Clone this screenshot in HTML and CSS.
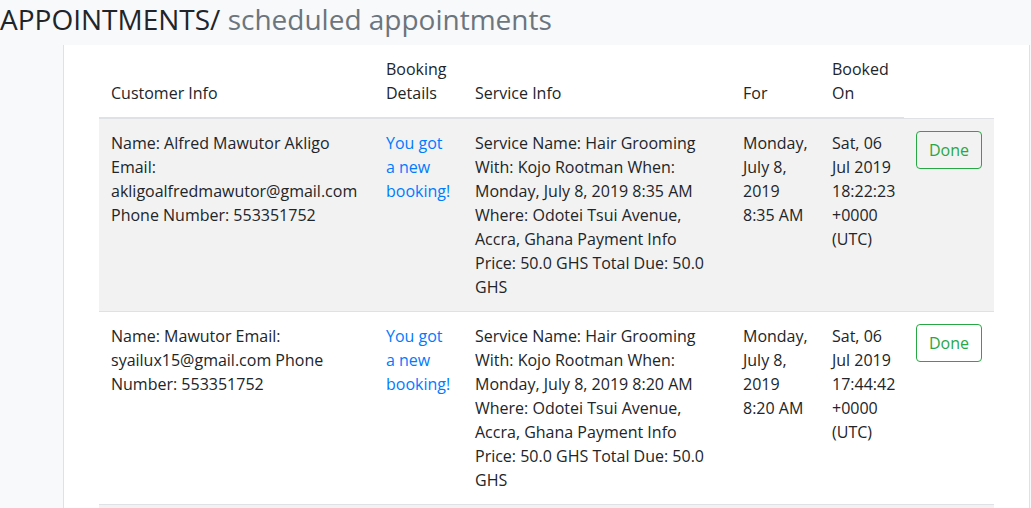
FILE: index.html
```html
<!DOCTYPE html>
<html lang="en">
<head>
<meta charset="utf-8">
<title>Scheduled appointments</title>
<link rel="stylesheet" href="styles.css">
</head>
<body>
<h3 class="page-title">APPOINTMENTS/ <span class="muted">scheduled appointments</span></h3>
<div class="card">
  <table class="table">
    <colgroup>
      <col class="c-customer">
      <col class="c-booking">
      <col class="c-service">
      <col class="c-for">
      <col class="c-booked">
      <col class="c-action">
    </colgroup>
    <thead>
      <tr>
        <th>Customer Info</th>
        <th>Booking Details</th>
        <th>Service Info</th>
        <th>For</th>
        <th>Booked On</th>
      </tr>
    </thead>
    <tbody>
      <tr class="striped">
        <td>Name: Alfred Mawutor Akligo Email: akligoalfredmawutor@gmail.com Phone Number: 553351752</td>
        <td><a class="link" href="#">You got a new booking!</a></td>
        <td>Service Name: Hair Grooming With: Kojo Rootman When: Monday, July 8, 2019 8:35 AM Where: Odotei Tsui Avenue, Accra, Ghana Payment Info Price: 50.0 GHS Total Due: 50.0 GHS</td>
        <td>Monday, July 8, 2019 8:35 AM</td>
        <td>Sat, 06 Jul 2019 18:22:23 +0000 (UTC)</td>
        <td><button class="btn-done" type="button">Done</button></td>
      </tr>
      <tr>
        <td>Name: Mawutor Email: syailux15@gmail.com Phone Number: 553351752</td>
        <td><a class="link" href="#">You got a new booking!</a></td>
        <td>Service Name: Hair Grooming With: Kojo Rootman When: Monday, July 8, 2019 8:20 AM Where: Odotei Tsui Avenue, Accra, Ghana Payment Info Price: 50.0 GHS Total Due: 50.0 GHS</td>
        <td>Monday, July 8, 2019 8:20 AM</td>
        <td>Sat, 06 Jul 2019 17:44:42 +0000 (UTC)</td>
        <td><button class="btn-done" type="button">Done</button></td>
      </tr>
      <tr class="striped empty-row">
        <td></td>
        <td></td>
        <td></td>
        <td></td>
        <td></td>
        <td></td>
      </tr>
    </tbody>
  </table>
</div>
</body>
</html>
```

FILE: styles.css
```css
html, body {
  margin: 0;
  padding: 0;
}
body {
  background: #f8f9fa;
  color: #212529;
  font-family: "Open Sans", "Liberation Sans", sans-serif;
  font-size: 16px;
  line-height: 24px;
  overflow: hidden;
  height: 508px;
}
.page-title {
  margin: 0;
  padding-top: 2px;
  height: 45px;
  box-sizing: border-box;
  font-size: 28px;
  line-height: 34px;
  font-weight: 400;
  color: #212529;
  white-space: nowrap;
}
.muted {
  color: #6c757d;
}
.card {
  margin-left: 63px;
  width: 967px;
  box-sizing: border-box;
  background: #fff;
  border-left: 1px solid #dee2e6;
  border-right: 1px solid #dee2e6;
  padding: 0 35px;
  min-height: 463px;
}
.table {
  width: 895px;
  table-layout: fixed;
  border-collapse: collapse;
}
.c-customer { width: 275px; }
.c-booking { width: 89px; }
.c-service { width: 268px; }
.c-for { width: 89px; }
.c-booked { width: 84px; }
.c-action { width: 90px; }
.table th,
.table td {
  padding: 12px;
  vertical-align: top;
  text-align: left;
}
.table th {
  font-weight: 400;
  vertical-align: bottom;
  border-bottom: 2px solid #dee2e6;
}
.table td {
  border-top: 1px solid #dee2e6;
}
.empty-row td {
  height: 24px;
}
.striped {
  background: #f2f2f2;
}
.link {
  color: #007bff;
  text-decoration: none;
}
.btn-done {
  font-family: inherit;
  font-size: 16px;
  line-height: 24px;
  padding: 6px 12px;
  color: #28a745;
  background: transparent;
  border: 1px solid #28a745;
  border-radius: 4px;
  cursor: pointer;
}
```
